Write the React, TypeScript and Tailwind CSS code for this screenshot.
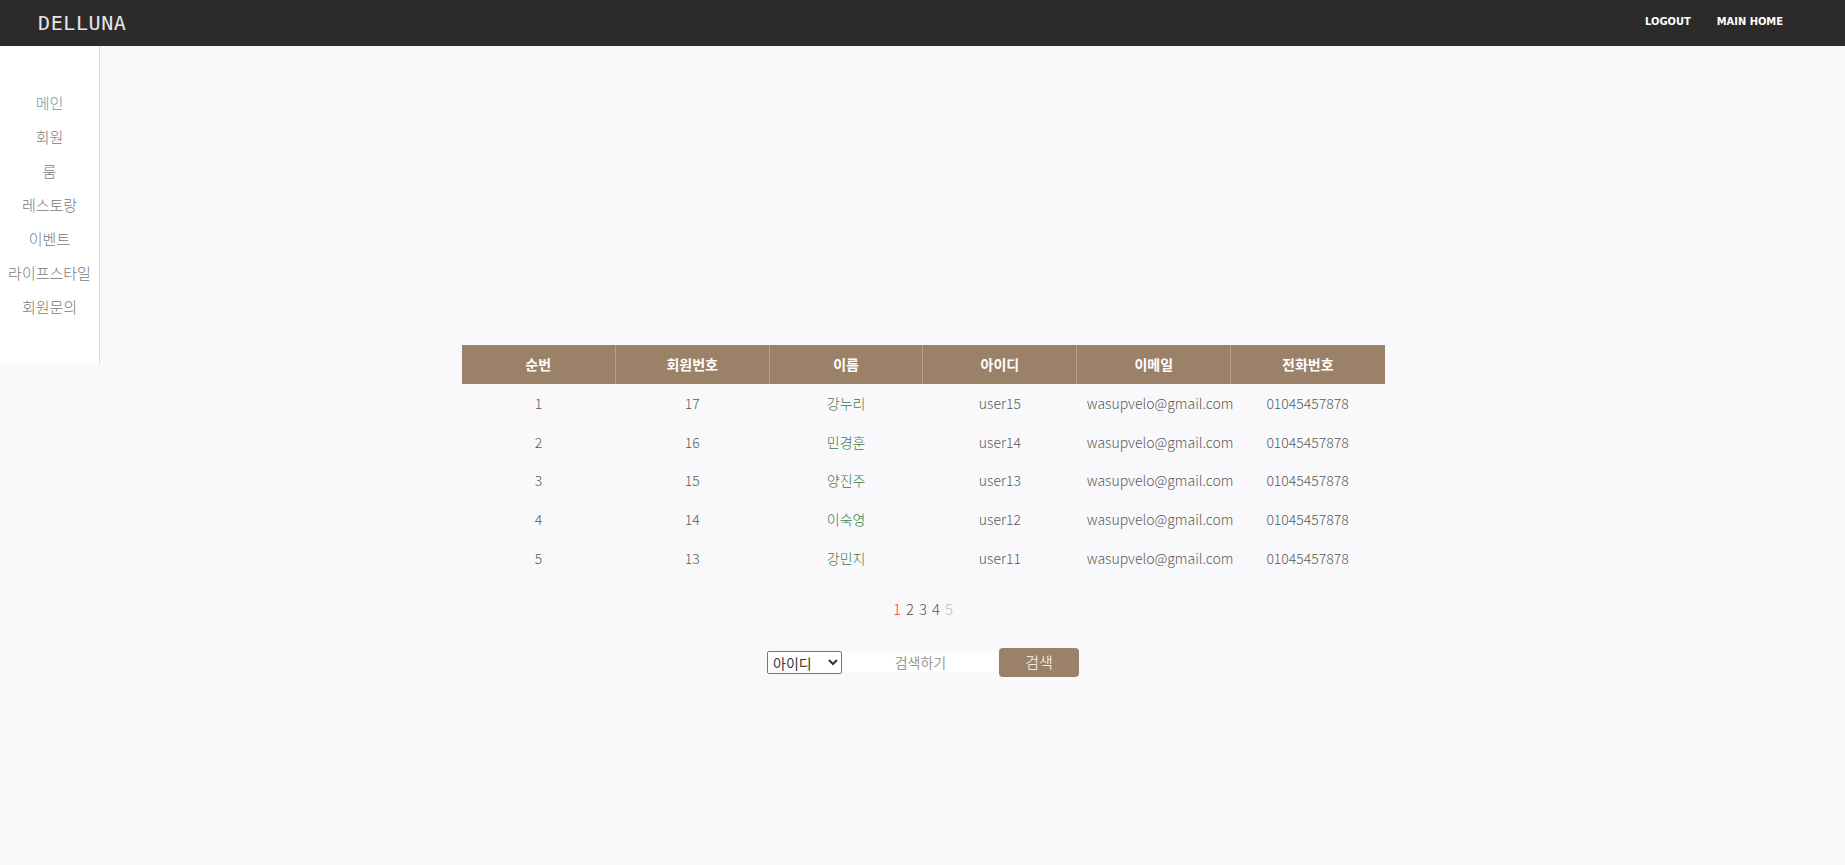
import React from 'react';

const menus = ['메인', '회원', '룸', '레스토랑', '이벤트', '라이프스타일', '회원문의'];

const columns = ['순번', '회원번호', '이름', '아이디', '이메일', '전화번호'];

const members = [
    { no: 1, memberNo: 17, name: '강누리', id: 'user15', email: 'wasupvelo@gmail.com', phone: '01045457878' },
    { no: 2, memberNo: 16, name: '민경훈', id: 'user14', email: 'wasupvelo@gmail.com', phone: '01045457878' },
    { no: 3, memberNo: 15, name: '양진주', id: 'user13', email: 'wasupvelo@gmail.com', phone: '01045457878' },
    { no: 4, memberNo: 14, name: '이숙영', id: 'user12', email: 'wasupvelo@gmail.com', phone: '01045457878' },
    { no: 5, memberNo: 13, name: '강민지', id: 'user11', email: 'wasupvelo@gmail.com', phone: '01045457878' }
];

const kr = "font-['Noto_Sans_CJK_KR',sans-serif]";

const Header = () => (
    <header className="h-[46px] bg-[#2d2b29] flex items-center justify-between pl-[38px] pr-[62px]">
        <span className="font-['DejaVu_Sans_Mono',monospace] text-[20px] tracking-[0.6px] text-[#e6e6e6]">
            DELLUNA
        </span>
        <nav className="flex gap-[26px] font-['DejaVu_Sans_Condensed',sans-serif] text-[11px] font-bold text-white pb-[1px]">
            <a>LOGOUT</a>
            <a>MAIN HOME</a>
        </nav>
    </header>
);

const Sidebar = () => (
    <aside className={`w-[100px] h-[318px] bg-white border-r border-[#dcdcdc] pt-[40px] flex flex-col items-center ${kr}`}>
        {menus.map((m, i) => (
            <a
                key={m}
                className={`h-[34px] text-[15px] font-light leading-[34px] ${i === 0 ? 'text-[#6b96a8]' : 'text-[#7a7a7a]'}`}
            >
                {m}
            </a>
        ))}
    </aside>
);

const MemberTable = () => (
    <table className={`w-[923px] table-fixed border-collapse ${kr}`}>
        <thead>
            <tr className="bg-[#9c8169] h-[39px]">
                {columns.map((c, i) => (
                    <th
                        key={c}
                        className={`text-[14px] font-bold text-white ${i > 0 ? 'border-l border-[#b9a28c]' : ''}`}
                    >
                        {c}
                    </th>
                ))}
            </tr>
        </thead>
        <tbody className="text-[14px] font-light text-[#5a5a5a]">
            {members.map((m) => (
                <tr key={m.no} className="h-[38.7px] text-center [&>td]:px-[10px] [&>td]:whitespace-nowrap">
                    <td>{m.no}</td>
                    <td>{m.memberNo}</td>
                    <td className="text-[#3a7a4a]">{m.name}</td>
                    <td>{m.id}</td>
                    <td>{m.email}</td>
                    <td>{m.phone}</td>
                </tr>
            ))}
        </tbody>
    </table>
);

const Pagination = () => (
    <div className={`flex gap-[5px] text-[15px] font-light ${kr}`}>
        <a className="text-[#ff3b3b]">1</a>
        <a className="text-[#555]">2</a>
        <a className="text-[#555]">3</a>
        <a className="text-[#555]">4</a>
        <a className="text-[#bbb]">5</a>
    </div>
);

const SearchBar = () => (
    <form className={`flex items-center ${kr}`} onSubmit={(e) => e.preventDefault()}>
        <select className="w-[75px] h-[23px] border border-[#767676] rounded-[2px] bg-white text-[14px] text-[#333] pl-[1px]">
            <option>아이디</option>
            <option>이름</option>
        </select>
        <input
            placeholder="검색하기"
            className="w-[157px] h-[20px] bg-white text-center text-[14px] placeholder:text-[#999] outline-none"
        />
        <button className="w-[80px] h-[29px] rounded-[4px] bg-[#9c8169] text-white text-[15px] font-light">
            검색
        </button>
    </form>
);

export default function App() {
    return (
        <div className="min-h-[865px] bg-[#f9f9fb]">
            <Header />
            <div className="flex">
                <Sidebar />
                <main className="flex-1 pr-[99px] pt-[299px] flex flex-col items-center">
                    <MemberTable />
                    <div className="mt-[21px]">
                        <Pagination />
                    </div>
                    <div className="mt-[27px]">
                        <SearchBar />
                    </div>
                </main>
            </div>
        </div>
    );
}
